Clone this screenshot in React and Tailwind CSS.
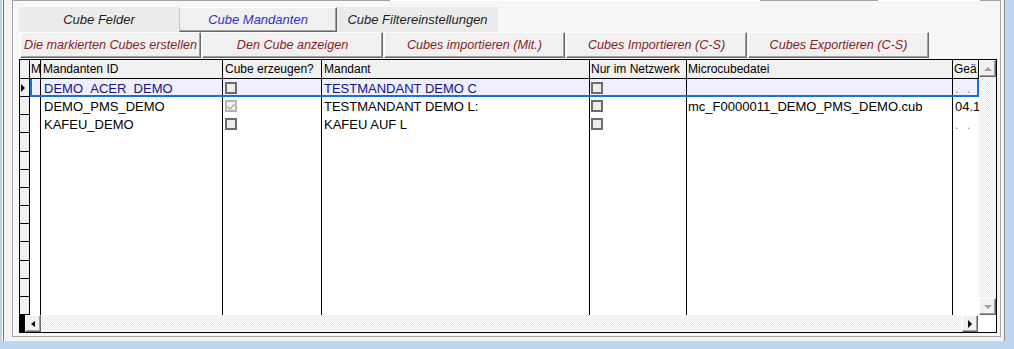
import React from "react";

const rows = [
  { id: "DEMO_ACER_DEMO", cube: false, mandant: "TESTMANDANT DEMO C", file: "", geae: "dots", sel: true },
  { id: "DEMO_PMS_DEMO", cube: true, mandant: "TESTMANDANT DEMO L:", file: "mc_F0000011_DEMO_PMS_DEMO.cub", geae: "04.1" },
  { id: "KAFEU_DEMO", cube: false, mandant: "KAFEU AUF L", file: "", geae: "dots" },
];

const empty = Array.from({ length: 10 }, () => null);

function Check({ checked }) {
  if (checked) {
    return (
      <div className="w-[12px] h-[12px] border-2 border-[#b4b4b4] bg-[#f3f3f3] flex items-center justify-center">
        <svg width="8" height="7" viewBox="0 0 8 7">
          <path d="M0.5 3.5 L3 6 L7.5 1" fill="none" stroke="#a8a8a8" strokeWidth="1.4" />
        </svg>
      </div>
    );
  }
  return <div className="w-[12px] h-[12px] border-2 border-[#6b6b6b] bg-[#ececec]" />;
}

function Row({ r }) {
  const sel = r && r.sel;

  return (
    <div className="flex-1 flex min-h-0">
      <div className="w-[10px] shrink-0 bg-[#f0f0f0] border-r border-b border-black flex items-center pl-px">
        {sel && <div className="w-0 h-0 border-y-[4px] border-y-transparent border-l-[4px] border-l-black" />}
      </div>

      <div className={`relative flex flex-1 text-[13px] leading-none ${sel ? "bg-[#eeeefc] text-[#15157a]" : "text-black"}`}>
        <div className="w-[11px] shrink-0 border-r border-black" />
        <div className="w-[182px] shrink-0 border-r border-black flex items-center pl-[3px]">
          {r && r.id}
        </div>
        <div className="w-[99px] shrink-0 border-r border-black flex items-center pl-[2px]">
          {r && <Check checked={r.cube} />}
        </div>
        <div className="w-[268px] shrink-0 border-r border-black flex items-center pl-[2px]">
          {r && r.mandant}
        </div>
        <div className="w-[97px] shrink-0 border-r border-black flex items-center pl-px">
          {r && <Check checked={false} />}
        </div>
        <div className="w-[266px] shrink-0 border-r border-black flex items-center pl-px">
          {r && r.file}
        </div>
        <div className="w-[26px] shrink-0 flex items-center pl-[2px] overflow-hidden whitespace-nowrap">
          {r && r.geae === "dots" && (
            <span className="text-[#c0883a]">
              <span>.</span>
              <span className="ml-[8px]">.</span>
            </span>
          )}
          {r && r.geae !== "dots" && r.geae}
        </div>

        {sel && (
          <div className="absolute inset-0 border-x-2 border-b-2 border-[#1673d0] pointer-events-none" />
        )}
      </div>
    </div>
  );
}

function ArrowBtn({ children, className = "" }) {
  return (
    <div className={`bg-[#f0f0f0] border border-t-white border-l-white border-r-[#696969] border-b-[#696969] shadow-[inset_-1px_-1px_0_#a0a0a0] flex items-center justify-center shrink-0 ${className}`}>
      {children}
    </div>
  );
}

const dither = "bg-[image:repeating-conic-gradient(#e8e8e8_0%_25%,#ffffff_0%_50%)] bg-[length:2px_2px]";

function App() {
  const buttons = [
    "Die markierten Cubes erstellen",
    "Den Cube anzeigen",
    "Cubes importieren (Mit.)",
    "Cubes Importieren (C-S)",
    "Cubes Exportieren (C-S)",
  ];

  return (
    <div className="w-[1014px] h-[349px] bg-[#bdd5ed] overflow-hidden font-['Liberation_Sans',Arial,sans-serif]">

      <div className="ml-[2px] w-[1003px] h-[341px] bg-[#f4f4f4] border-l border-l-white border-r border-r-[#8c8c8c] flex">
        <div className="flex-1 border-l border-l-[#767676] pl-[8px]">

          {/* Tab page */}
          <div className="w-[989px] h-[337px] border border-[#a3a3a3] bg-[#f7f7f7] relative">

            <div className="absolute top-[-1px] left-[377px] w-[370px] h-px bg-white" />
            <div className="absolute top-[-1px] left-[865px] w-[102px] h-px bg-white" />

            {/* Tabs */}
            <div className="mt-[6px] ml-[6px] h-[25px] flex text-[13px] leading-none">
              <div className="w-[160px] bg-[#ebebeb] flex items-center justify-center italic text-[#1e1e1e]">
                Cube Felder
              </div>
              <div className="w-[158px] bg-[#f0f0f0] border border-t-white border-l-[#c8c8c8] border-r-[#696969] border-b-[#696969] shadow-[inset_-1px_-1px_0_#a0a0a0] flex items-center justify-center italic text-[#3030c8]">
                Cube Mandanten
              </div>
              <div className="w-[161px] bg-[#ebebeb] flex items-center justify-center italic text-[#1e1e1e]">
                Cube Filtereinstellungen
              </div>
            </div>

            {/* Buttons */}
            <div className="ml-[7px] h-[26px] flex gap-[1px]">
              {buttons.map((b) => (
                <div
                  key={b}
                  className="w-[181px] bg-[#f0f0f0] border border-t-white border-l-white border-r-[#696969] border-b-[#696969] shadow-[inset_-1px_-1px_0_#a0a0a0] flex items-center justify-center italic text-[12.6px] leading-none text-[#8b1d1d] whitespace-nowrap"
                >
                  {b}
                </div>
              ))}
            </div>

            {/* Grid */}
            <div className="mt-px ml-[6px] w-[978px] h-[274px] border border-black bg-white flex flex-col">

              <div className="flex flex-1 min-h-0">

                <div className="w-[959px] flex flex-col">
                  <div className="h-[19px] shrink-0 flex bg-[#f0f0f0] border-b border-black text-[12px] leading-none text-black whitespace-nowrap">
                    <div className="w-[10px] border-r border-black" />
                    <div className="w-[11px] border-r border-black flex items-center pl-px overflow-hidden">M</div>
                    <div className="w-[182px] border-r border-black flex items-center pl-[2px]">Mandanten ID</div>
                    <div className="w-[99px] border-r border-black flex items-center pl-[2px]">Cube erzeugen?</div>
                    <div className="w-[268px] border-r border-black flex items-center pl-[2px]">Mandant</div>
                    <div className="w-[97px] border-r border-black flex items-center pl-px">Nur im Netzwerk</div>
                    <div className="w-[266px] border-r border-black flex items-center pl-px">Microcubedatei</div>
                    <div className="w-[26px] border-r border-black flex items-center pl-px overflow-hidden">Geä</div>
                  </div>

                  <div className="flex-1 flex flex-col min-h-0">
                    {rows.map((r) => (
                      <Row key={r.id} r={r} />
                    ))}
                    {empty.map((_, i) => (
                      <Row key={i} r={null} />
                    ))}
                  </div>
                </div>

                {/* Vertical scrollbar */}
                <div className="w-[17px] flex flex-col">
                  <ArrowBtn className="h-[17px]">
                    <div className="w-0 h-0 border-x-[4px] border-x-transparent border-b-[4px] border-b-[#a0a0a0]" />
                  </ArrowBtn>
                  <div className={`flex-1 ${dither}`} />
                  <ArrowBtn className="h-[17px]">
                    <div className="w-0 h-0 border-x-[4px] border-x-transparent border-t-[4px] border-t-[#a0a0a0]" />
                  </ArrowBtn>
                </div>

              </div>

              {/* Horizontal scrollbar */}
              <div className="h-[17px] shrink-0 flex">
                <div className="w-[5px] bg-black" />
                <ArrowBtn className="w-[16px]">
                  <div className="w-0 h-0 border-y-[3px] border-y-transparent border-r-[4px] border-r-black" />
                </ArrowBtn>
                <div className={`flex-1 ${dither}`} />
                <ArrowBtn className="w-[16px]">
                  <div className="w-0 h-0 border-y-[4px] border-y-transparent border-l-[4px] border-l-black" />
                </ArrowBtn>
                <div className="w-[18px] bg-white" />
              </div>

            </div>

          </div>

        </div>
      </div>

    </div>
  );
}

export default App;
